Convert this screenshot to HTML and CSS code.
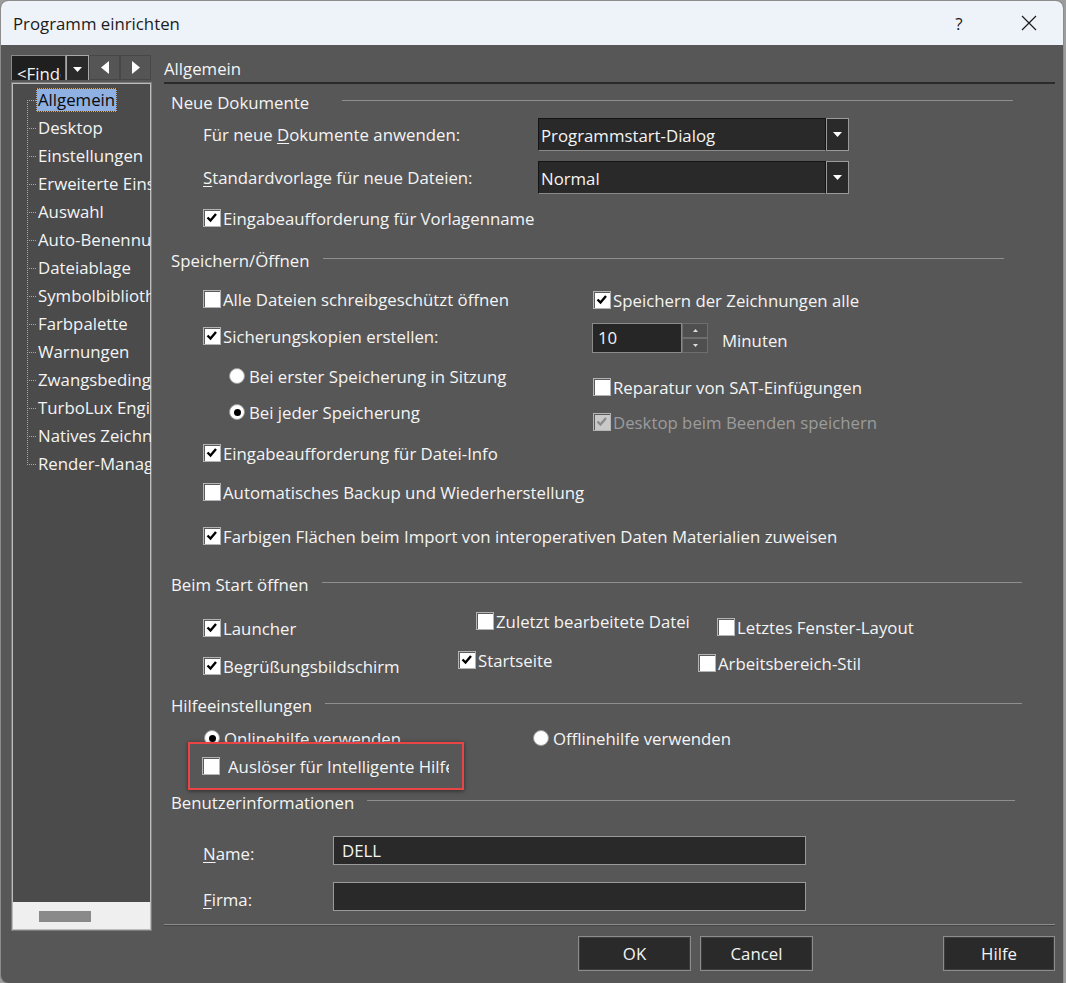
FILE: index.html
```html
<!DOCTYPE html>
<html lang="de">
<head>
    <meta charset="UTF-8">
    <title>Programm einrichten</title>
    <link rel="stylesheet" href="styles.css">
</head>
<body>
<div class="window">
    <!-- title bar -->
    <div class="titlebar">
        <span class="title">Programm einrichten</span>
        <span class="tb-help">?</span>
        <span class="tb-close">
            <svg width="16" height="16" viewBox="0 0 16 16"><path d="M1 1L15 15M15 1L1 15" stroke="#1b1b1b" stroke-width="1.2"/></svg>
        </span>
    </div>

    <div class="main">
        <!-- left navigation -->
        <div class="sidebar">
            <div class="toolbar">
                <div class="find"><span class="find-text">&lt;Finden&gt;</span></div>
                <div class="find-drop"><svg width="9" height="5" viewBox="0 0 9 5"><path d="M0 0H9L4.5 5Z" fill="#fff"/></svg></div>
                <div class="nav-btn"><svg width="8" height="13" viewBox="0 0 8 13"><path d="M8 0V13L0 6.5Z" fill="#fff"/></svg></div>
                <div class="nav-btn"><svg width="8" height="13" viewBox="0 0 8 13"><path d="M0 0V13L8 6.5Z" fill="#fff"/></svg></div>
            </div>
            <div class="tree">
                <ul class="tree-list">
                    <li class="selected"><span>Allgemein</span></li>
                    <li><span>Desktop</span></li>
                    <li><span>Einstellungen</span></li>
                    <li><span>Erweiterte Einstellungen</span></li>
                    <li><span>Auswahl</span></li>
                    <li><span>Auto-Benennung</span></li>
                    <li><span>Dateiablage</span></li>
                    <li><span>Symbolbibliothek</span></li>
                    <li><span>Farbpalette</span></li>
                    <li><span>Warnungen</span></li>
                    <li><span>Zwangsbedingungen</span></li>
                    <li><span>TurboLux Engine</span></li>
                    <li><span>Natives Zeichnen</span></li>
                    <li><span>Render-Manager</span></li>
                </ul>
                <div class="hscroll"><div class="hthumb"></div></div>
            </div>
        </div>

        <!-- settings page -->
        <div class="content">
            <div class="page-title">Allgemein</div>

            <div class="sec-head sec-neue">Neue Dokumente</div>
            <div class="sec-body">
                <div class="form-row row-combo1">
                    <span class="form-label">Für neue <u>D</u>okumente anwenden:</span>
                    <div class="combo">
                        <span class="combo-text">Programmstart-Dialog</span>
                        <span class="combo-btn"><svg width="9" height="5" viewBox="0 0 9 5"><path d="M0 0H9L4.5 5Z" fill="#fff"/></svg></span>
                    </div>
                </div>
                <div class="form-row row-combo2">
                    <span class="form-label"><u>S</u>tandardvorlage für neue Dateien:</span>
                    <div class="combo">
                        <span class="combo-text">Normal</span>
                        <span class="combo-btn"><svg width="9" height="5" viewBox="0 0 9 5"><path d="M0 0H9L4.5 5Z" fill="#fff"/></svg></span>
                    </div>
                </div>
                <label class="check row-vorlage"><span class="box"><svg width="14" height="14" viewBox="0 0 14 14"><path d="M2.5 6.5L5.5 9.5L11 3" fill="none" stroke="#000" stroke-width="2.4"/></svg></span>Eingabeaufforderung für Vorlagenname</label>
            </div>

            <div class="sec-head sec-save">Speichern/Öffnen</div>
            <div class="sec-body">
                <div class="save-cols">
                    <div class="save-left">
                        <label class="check s-l1"><span class="box"></span>Alle Dateien schreibgeschützt öffnen</label>
                        <label class="check s-l2"><span class="box"><svg width="14" height="14" viewBox="0 0 14 14"><path d="M2.5 6.5L5.5 9.5L11 3" fill="none" stroke="#000" stroke-width="2.4"/></svg></span>Sicherungskopien erstellen:</label>
                        <label class="radio s-l3"><span class="dot"></span>Bei erster Speicherung in Sitzung</label>
                        <label class="radio s-l4"><span class="dot on"></span>Bei jeder Speicherung</label>
                    </div>
                    <div class="save-right">
                        <label class="check s-r1"><span class="box"><svg width="14" height="14" viewBox="0 0 14 14"><path d="M2.5 6.5L5.5 9.5L11 3" fill="none" stroke="#000" stroke-width="2.4"/></svg></span>Speichern der Zeichnungen alle</label>
                        <div class="spin-row">
                            <div class="spin">
                                <span class="spin-val">10</span>
                                <span class="spin-btns">
                                    <span class="spin-btn"><svg width="5" height="3" viewBox="0 0 5 3"><path d="M0 3H5L2.5 0Z" fill="#ddd"/></svg></span>
                                    <span class="spin-btn"><svg width="5" height="3" viewBox="0 0 5 3"><path d="M0 0H5L2.5 3Z" fill="#ddd"/></svg></span>
                                </span>
                            </div>
                            <span class="spin-unit">Minuten</span>
                        </div>
                        <label class="check s-r3"><span class="box"></span>Reparatur von SAT-Einfügungen</label>
                        <label class="check s-r4 disabled"><span class="box"><svg width="14" height="14" viewBox="0 0 14 14"><path d="M2.5 6.5L5.5 9.5L11 3" fill="none" stroke="#8c8c8c" stroke-width="2.4"/></svg></span>Desktop beim Beenden speichern</label>
                    </div>
                </div>
                <label class="check s-b1"><span class="box"><svg width="14" height="14" viewBox="0 0 14 14"><path d="M2.5 6.5L5.5 9.5L11 3" fill="none" stroke="#000" stroke-width="2.4"/></svg></span>Eingabeaufforderung für Datei-Info</label>
                <label class="check s-b2"><span class="box"></span>Automatisches Backup und Wiederherstellung</label>
                <label class="check s-b3"><span class="box"><svg width="14" height="14" viewBox="0 0 14 14"><path d="M2.5 6.5L5.5 9.5L11 3" fill="none" stroke="#000" stroke-width="2.4"/></svg></span>Farbigen Flächen beim Import von interoperativen Daten Materialien zuweisen</label>
            </div>

            <div class="sec-head sec-start">Beim Start öffnen</div>
            <div class="sec-body">
                <div class="start-cols">
                    <div class="start-col1">
                        <label class="check b-11"><span class="box"><svg width="14" height="14" viewBox="0 0 14 14"><path d="M2.5 6.5L5.5 9.5L11 3" fill="none" stroke="#000" stroke-width="2.4"/></svg></span>Launcher</label>
                        <label class="check b-12"><span class="box"><svg width="14" height="14" viewBox="0 0 14 14"><path d="M2.5 6.5L5.5 9.5L11 3" fill="none" stroke="#000" stroke-width="2.4"/></svg></span>Begrüßungsbildschirm</label>
                    </div>
                    <div class="start-col2">
                        <label class="check b-21"><span class="box"></span>Zuletzt bearbeitete Datei</label>
                        <label class="check b-22"><span class="box"><svg width="14" height="14" viewBox="0 0 14 14"><path d="M2.5 6.5L5.5 9.5L11 3" fill="none" stroke="#000" stroke-width="2.4"/></svg></span>Startseite</label>
                    </div>
                    <div class="start-col3">
                        <label class="check b-31"><span class="box"></span>Letztes Fenster-Layout</label>
                        <label class="check b-32"><span class="box"></span>Arbeitsbereich-Stil</label>
                    </div>
                </div>
            </div>

            <div class="sec-head sec-help">Hilfeeinstellungen</div>
            <div class="sec-body">
                <div class="help-radios">
                    <label class="radio h-online"><span class="dot on"></span>Onlinehilfe verwenden</label>
                    <label class="radio"><span class="dot"></span>Offlinehilfe verwenden</label>
                </div>
                <div class="highlight">
                    <span class="box"></span>
                    <span class="hl-text">Auslöser für Intelligente Hilfe</span>
                </div>
            </div>

            <div class="sec-head sec-user">Benutzerinformationen</div>
            <div class="sec-body">
                <div class="user-row u-name">
                    <span class="user-label"><u>N</u>ame:</span>
                    <div class="text-input">DELL</div>
                </div>
                <div class="user-row u-firma">
                    <span class="user-label"><u>F</u>irma:</span>
                    <div class="text-input"></div>
                </div>
            </div>

            <div class="footer-line"></div>
            <div class="buttons">
                <button class="btn btn-ok">OK</button>
                <button class="btn btn-cancel">Cancel</button>
                <button class="btn btn-help">Hilfe</button>
            </div>
        </div>
    </div>
</div>
</body>
</html>
```

FILE: styles.css
```css
* { box-sizing: border-box; }
html, body { margin: 0; padding: 0; }
body { width: 1066px; height: 983px; overflow: hidden; background: #9c9c9c; font-family: "Open Sans", "Noto Sans", sans-serif; font-size: 16.8px; color: #f4f4f4; }
u { text-decoration-thickness: 1px; text-underline-offset: 2px; }
label { cursor: default; }

.window { width: 1064px; height: 983px; background: #575757; border: 1px solid #8c8c8c; border-bottom: none; border-radius: 8px 8px 0 8px; overflow: hidden; display: flex; flex-direction: column; }

/* title bar */
.titlebar { height: 44px; flex: none; background: #eef3f9; color: #1b1b1b; display: flex; align-items: center; }
.title { flex: 1; padding-left: 12px; }
.tb-help { width: 46px; text-align: center; font-size: 17px; margin-right: 24px; }
.tb-close { width: 46px; margin-right: 11px; display: flex; justify-content: center; }

.main { flex: 1; display: flex; padding: 10px 8px 0 10px; }

/* left navigation */
.sidebar { width: 141px; flex: none; display: flex; flex-direction: column; }
.toolbar { height: 25px; display: flex; }
.find { width: 55px; height: 25px; background: #1f1f1f; border: 1px solid #8a8a8a; border-bottom: none; padding: 7px 0 0 5px; line-height: 22px; overflow: hidden; }
.find-text { display: block; width: 44px; overflow: hidden; white-space: nowrap; }
.find-drop { width: 23px; background: #2a2a2a; border: 1px solid #a8a8a8; border-bottom: none; display: flex; justify-content: center; padding-top: 11px; }
.nav-btn { width: 31px; background: #555; border: 1px solid #474747; display: flex; align-items: center; justify-content: center; }

.tree { height: 849px; margin-top: 2px; border: 1px solid #7d7d7d; box-shadow: inset 0 0 0 1px #bcbcbc; padding: 1px; background: #4b4b4b; display: flex; flex-direction: column; overflow: hidden; }
.tree-list { list-style: none; margin: 0; padding: 2px 0 0 14px; flex: 1; }
.tree-list li { height: 28px; line-height: 28px; padding-left: 9px; white-space: nowrap;
    background:
        repeating-linear-gradient(to bottom, #a8a8a8 0 1px, transparent 1px 2px) 0 0 / 1px 100% no-repeat,
        repeating-linear-gradient(to right, #a8a8a8 0 1px, transparent 1px 2px) 0 14px / 9px 1px no-repeat; }
.tree-list li:first-child { background:
        repeating-linear-gradient(to bottom, #a8a8a8 0 1px, transparent 1px 2px) 0 14px / 1px 14px no-repeat,
        repeating-linear-gradient(to right, #a8a8a8 0 1px, transparent 1px 2px) 0 14px / 9px 1px no-repeat; }
.tree-list li:last-child { background:
        repeating-linear-gradient(to bottom, #a8a8a8 0 1px, transparent 1px 2px) 0 0 / 1px 14px no-repeat,
        repeating-linear-gradient(to right, #a8a8a8 0 1px, transparent 1px 2px) 0 14px / 9px 1px no-repeat; }
.tree-list li span { padding: 0 2px; }
.tree-list li.selected span { display: inline-block; line-height: 24px; margin-top: 2px; background: #8fb0e2; color: #0a0a0a; outline: 1px dotted #5a3c14; outline-offset: -1px; }

.hscroll { height: 27px; flex: none; background: #efefef; padding: 9px 0 0 26px; }
.hthumb { width: 52px; height: 11px; background: #8a8a8a; }

/* content page */
.content { flex: 1; margin-left: 12px; display: flex; flex-direction: column; white-space: nowrap; }
.page-title { height: 29px; line-height: 27px; border-bottom: 2px solid #2a2a2a; }

.sec-head { height: 24px; line-height: 24px; padding-left: 7px; display: flex; align-items: center; }
.sec-head::after { content: ""; flex: 1; border-top: 1px solid #8f8f8f; margin: -5px 40px 0 13px; }
.sec-neue { margin-top: 7px; }
.sec-neue::after { margin-left: 33px; margin-right: 42px; }
.sec-save { margin-top: 19px; }
.sec-save::after { margin-right: 51px; }
.sec-start { margin-top: 25px; }
.sec-start::after { margin-right: 33px; }
.sec-help { margin-top: 16px; }
.sec-help::after { margin-right: 33px; }
.sec-user { margin-top: 1px; }

.sec-body { padding-left: 39px; }

.form-row { display: flex; align-items: center; height: 33px; }
.row-combo1 { margin-top: 3px; }
.row-combo2 { margin-top: 10px; }
.form-label { width: 335px; }
.combo { display: flex; width: 311px; height: 33px; }
.combo-text { flex: 1; background: #292929; border: 1px solid #141414; border-bottom-color: #8a8a8a; padding: 2px 0 0 2px; line-height: 29px; }
.combo-btn { width: 23px; background: #2a2a2a; border: 1px solid #9a9a9a; display: flex; align-items: center; justify-content: center; }

/* checkboxes and radios */
.check, .radio { display: flex; align-items: center; height: 24px; }
.box { width: 18px; height: 18px; flex: none; background: #fff; border: 1px solid #b4b4b4; box-shadow: inset 1px 1px 0 #5a5a5a; margin-right: 2px; display: flex; align-items: center; justify-content: center; }
.check.disabled { color: #9c9c9c; }
.check.disabled .box { background: #c9c9c9; }
.dot { width: 16px; height: 16px; flex: none; border-radius: 50%; background: #fff; border: 1px solid #9a9a9a; margin-right: 4px; display: flex; align-items: center; justify-content: center; }
.dot.on::after { content: ""; width: 7px; height: 7px; border-radius: 50%; background: #000; }

.row-vorlage { margin-top: 12px; }

.save-cols { display: flex; }
.save-left { width: 390px; }
.s-l1 { margin-top: 14px; }
.s-l2 { margin-top: 13px; }
.s-l3 { margin-top: 16px; margin-left: 26px; }
.s-l4 { margin-top: 12px; margin-left: 26px; }
.s-r1 { margin-top: 15px; }
.spin-row { display: flex; height: 30px; margin-top: 11px; margin-left: -1px; }
.spin { display: flex; }
.spin-val { width: 90px; background: #262626; border: 1px solid #8a8a8a; line-height: 28px; padding-left: 5px; }
.spin-btns { width: 26px; display: flex; flex-direction: column; }
.spin-btn { flex: 1; background: #4f4f4f; border: 1px solid #6e6e6e; display: flex; align-items: center; justify-content: center; }
.spin-unit { margin: 6px 0 0 14px; line-height: 24px; }
.s-r3 { margin-top: 22px; }
.s-r4 { margin-top: 11px; }
.s-b1 { margin-top: 7px; }
.s-b2 { margin-top: 15px; }
.s-b3 { margin-top: 20px; }

.start-cols { display: flex; }
.start-col1 { width: 255px; }
.start-col2 { width: 240px; }
.b-11 { margin-top: 19px; }
.b-12 { margin-top: 14px; }
.b-21 { margin-top: 12px; margin-left: 18px; }
.b-22 { margin-top: 15px; }
.b-31 { margin-top: 18px; margin-left: 19px; }
.b-32 { margin-top: 12px; }

.help-radios { display: flex; height: 24px; margin: 8px 0 -8px 1px; }
.h-online { width: 329px; }
.highlight { position: relative; width: 276px; height: 48px; margin-left: -15px; background: #575757; border: 2px solid #e94446; box-shadow: 0 1px 4px rgba(0, 0, 0, 0.5); display: flex; align-items: center; padding-left: 12px; }
.hl-text { width: 221px; margin-left: 6px; overflow: hidden; }

.user-row { display: flex; height: 29px; }
.u-name { margin-top: 21px; }
.u-firma { margin-top: 17px; }
.user-label { width: 130px; padding-top: 6px; line-height: 24px; }
.text-input { width: 473px; background: #292929; border: 1px solid #9a9a9a; line-height: 27px; padding-left: 8px; }

.footer-line { margin-top: 13px; border-top: 1px solid #8c8c8c; border-bottom: 1px solid #444; }
.buttons { display: flex; margin-top: 10px; }
.btn { height: 35px; width: 113px; background: #2a2a2a; color: #f4f4f4; border: 1px solid #8c8c8c; box-shadow: inset 0 0 0 1px #3d3d3d; font-family: inherit; font-size: 16.8px; }
.btn-ok { margin-left: 414px; }
.btn-cancel { margin-left: 9px; }
.btn-help { margin-left: auto; width: 112px; }
```
